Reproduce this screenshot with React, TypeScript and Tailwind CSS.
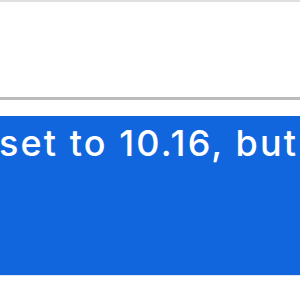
export default function App() {
  return (
    <div className="w-[300px] h-[300px] overflow-hidden bg-white flex flex-col">
      <div className="h-[2px] bg-[#e2dfdf]" />
      <div className="h-[95px] bg-white" />
      <div className="h-[3px] bg-[#bbbbbb]" />
      <div className="h-[16px] bg-white" />
      <div className="h-[159px] bg-[#1166dd] overflow-hidden">
        <div
          className="whitespace-nowrap text-white text-[36px] font-medium leading-[40px] pt-[7px] ml-[-1px] tracking-[2.1px]"
          style={{ fontFamily: "Inter, 'Liberation Sans', sans-serif" }}
        >
          set to 10.16, but
        </div>
      </div>
      <div className="h-[1px] bg-[#dbe4f2]" />
      <div className="flex-1 bg-white" />
    </div>
  );
}
